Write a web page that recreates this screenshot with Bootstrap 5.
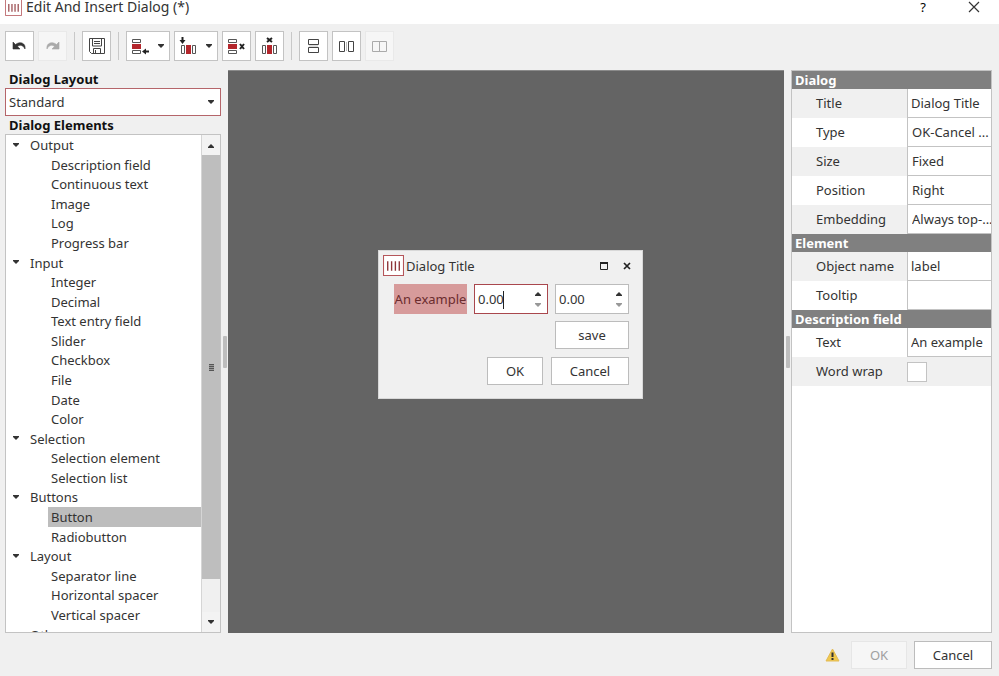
<!DOCTYPE html>
<html lang="en">
<head>
<meta charset="utf-8">
<meta name="viewport" content="width=device-width, initial-scale=1">
<title>Edit And Insert Dialog (*)</title>
<link href="https://cdn.jsdelivr.net/npm/bootstrap@5.3.0/dist/css/bootstrap.min.css" rel="stylesheet">
<style>
body{font-family:"Noto Sans","Open Sans",sans-serif;font-size:13px;line-height:18px;color:#333;background:#f0f0f0}
svg{display:block;flex:none}
h1,h2{font-size:14px;line-height:14px;font-weight:400;margin:0}
h2{font-size:13px;line-height:18px}
.titlebar{height:24px;background:#fff;padding:0 19px 10px 5px}
.titlebar button{border:0;background:none;padding:0;width:12px;line-height:14px}
.titlebar .help{margin-right:39px}
.tools{padding:7px 5px 9px}
.tool{display:flex;align-items:center;justify-content:center;gap:7px;width:29px;height:30px;padding:0;background:#fff;border:1px solid #c3c3c3}
.tool.wide{width:44px}
.tool:disabled{border-color:#e9e9e9;background:#f6f6f6}
.rule{width:1px;height:28px;background:#c8c8c8;margin:0 3px}
.leftpane{flex:0 0 216px;margin-left:5px}
.heading{font-weight:700;color:#111;padding-left:4px;line-height:18px}
.picker{position:relative;height:29px}
.picker select{appearance:none;width:100%;height:28px;border:1px solid #b5656a;background:#fff;color:#333;padding:0 3px;display:block}
.picker svg{position:absolute;right:6px;top:12px;pointer-events:none}
.treebox{border:1px solid #c3c3c3;background:#fff}
.tree{display:grid;grid-auto-rows:1fr;height:509px;margin:0;padding:0;list-style:none}
.tree li{display:flex;align-items:center;padding-left:3px;margin-left:42px}
.tree .group{margin-left:0;padding-left:6px;gap:10px}
.tree .chosen{background:#bdbdbd}
.scroller{width:19px;background:#f0f0f0;border-left:1px solid #d5d5d5}
.scroller button{height:20px;border:0;background:#f3f3f3;padding:0}
.thumb{background:#bebebe;height:424px}
.grip{width:5px;height:7px;background:repeating-linear-gradient(#555 0 1px,#999 1px 2px)}
.gutter{flex:0 0 7px}
.gutter span{width:4px;height:32px;background:#bdbdbd;border-radius:1px}
.canvas{background:#646464;border-top:1px solid #8a8a8a}
.props{flex:0 0 201px;border:1px solid #c3c3c3;background:#fff;overflow:hidden;margin-right:7px}
.props table{width:100%;table-layout:fixed;border-collapse:collapse;margin:0}
.props th,.props td{padding:0;font-weight:400;vertical-align:middle}
.props .section th{height:18px;line-height:18px;background:#808080;color:#fff;font-weight:700;padding-left:3px}
.props .entry{height:29px}
.props .entry th{padding:0 0 1px 24px}
.props label{display:block}
.props .shade{background:#f0f0f0}
.props td input[type=text],.props td select{appearance:none;display:block;width:100%;height:29px;border:1px solid #c3c3c3;border-width:0 0 1px 1px;border-radius:0;background:#fff;color:#333;padding:0 3px;outline:0}
.props td select{padding:0 0 0 4px}
.tick{appearance:none;display:block;width:20px;height:20px;border:1px solid #c3c3c3;background:#fff;margin:0}
.push{height:28px;border:1px solid #bcbcbc;background:#fff;color:#333;padding:0}
.push:disabled{border-color:#e6e6e6;background:#f6f6f6;color:#a0a0a0}
.w-s{width:56px}.w-l{width:78px}
.foot{padding:8px 7px 7px;gap:7px;height:43px}
.preview{position:absolute;left:150px;top:179px;width:265px;background:#f0f0f0;border:1px solid #d8d8d8;padding:4px 13px 13px 4px}
.preview .bar{gap:2px;margin-right:-6px}
.preview .maximise{margin-right:13px}
.fields{display:grid;grid-template-columns:73px 74px 74px;gap:7px;justify-content:end}
.marked{background:#d79b9b;color:#6b2c2e}
.spin{position:relative;height:30px;border:1px solid #bcbcbc;background:#fff}
.spin.active{border-color:#a9474d}
.spin input{width:100%;border:0;background:none;color:#333;padding:0 3px;outline:0;caret-color:transparent;min-width:0}
.spin button{border:0;background:none;padding:0;width:19px;height:12px}
.caret{position:absolute;left:28px;top:6px;width:1px;height:18px;background:#222}
</style>
<script defer src="https://cdn.jsdelivr.net/npm/bootstrap@5.3.0/dist/js/bootstrap.bundle.min.js"></script>
</head>
<body class="vh-100 d-flex flex-column overflow-hidden">
<svg class="d-none" aria-hidden="true">
  <symbol id="down" viewBox="0 0 8 5"><path d="M1 0h6v1L4 4 1 1z" fill="#333"/></symbol>
  <symbol id="up" viewBox="0 0 8 5"><path d="M1 5h6V4L4 1 1 4z" fill="#333"/></symbol>
  <symbol id="cross" viewBox="0 0 8 8"><path d="M1 1l6 6M7 1L1 7" stroke="#222" stroke-width="1.700"/></symbol>
  <symbol id="logo" viewBox="0 0 20 20"><path d="M.5.5h19v19H.5z" fill="#fff" stroke="#b5555a"/><path d="M4.500 6v9M8.200 6v9M11.800 6v9M15.500 6v9" stroke="#8d3438" stroke-width="1.300"/></symbol>
</svg>

<header class="titlebar d-flex align-items-center">
  <svg width="17" height="17" class="me-1"><use href="#logo"/></svg>
  <h1>Edit And Insert Dialog (*)</h1>
  <button class="help ms-auto" aria-label="Help">?</button>
  <button aria-label="Close"><svg width="12" height="12" viewBox="0 0 12 12"><path d="M1 1l10 10M11 1L1 11" stroke="#333" stroke-width="1.200"/></svg></button>
</header>

<div class="tools d-flex align-items-center gap-1" role="toolbar" aria-label="Tools">
  <button class="tool" aria-label="Undo"><svg width="15" height="12" viewBox="0 0 15 12"><path d="M1 2v7h7L5.500 6.500C8 4.500 11 5 13 9c1-6-5-8-9.500-4.500z" fill="#333" stroke="#333" stroke-width=".6"/></svg></button>
  <button class="tool" aria-label="Redo" disabled><svg width="15" height="12" viewBox="0 0 15 12"><path d="M14 2v7H7l2.500-2.500C7 4.500 4 5 2 9 1 3 7 1 11.500 4.500z" fill="#aaa" stroke="#aaa" stroke-width=".6"/></svg></button>
  <span class="rule"></span>
  <button class="tool" aria-label="Save"><svg width="16" height="16" viewBox="0 0 16 16" fill="none" stroke="#444"><path d="M.5.5h15v15h-13l-2-2zM3.500 1v7h9V1M5 3.500h6M5 5.500h6M4.500 15v-4.500h7V15M6.500 12v3"/></svg></button>
  <span class="rule"></span>
  <button class="tool wide" aria-label="Insert row"><svg width="19" height="17" viewBox="0 0 19 17"><path d="M1.500 1.500h8v3h-8zM1.500 12.500h8v3h-8z" fill="#fff" stroke="#555"/><path d="M1 6h9v5H1z" fill="#b3262c"/><path d="M18 13.500h-5" stroke="#222" stroke-width="2"/><path d="M11 13.500l4-3v6z" fill="#222"/></svg><svg width="8" height="5"><use href="#down"/></svg></button>
  <button class="tool wide" aria-label="Insert column"><svg width="19" height="18" viewBox="0 0 19 18"><path d="M2.500 8.500h3v8h-3zM13.500 8.500h3v8h-3z" fill="#fff" stroke="#555"/><path d="M7 8h5v9H7z" fill="#b3262c"/><path d="M3.500 0v4" stroke="#222" stroke-width="2"/><path d="M3.500 7l-3-4h6z" fill="#222"/></svg><svg width="8" height="5"><use href="#down"/></svg></button>
  <button class="tool" aria-label="Delete row"><svg width="19" height="17" viewBox="0 0 19 17"><path d="M1.500 1.500h8v3h-8zM1.500 12.500h8v3h-8z" fill="#fff" stroke="#555"/><path d="M1 6h9v5H1z" fill="#b3262c"/><path d="M13 6l4 5M17 6l-4 5" stroke="#222" stroke-width="2"/></svg></button>
  <button class="tool" aria-label="Delete column"><svg width="17" height="18" viewBox="0 0 17 18"><path d="M1.500 8.500h3v8h-3zM12.500 8.500h3v8h-3z" fill="#fff" stroke="#555"/><path d="M6 8h5v9H6z" fill="#b3262c"/><path d="M6 1l5 4M11 1L6 5" stroke="#222" stroke-width="2"/></svg></button>
  <span class="rule"></span>
  <button class="tool" aria-label="Merge rows"><svg width="11" height="16" viewBox="0 0 11 16"><path d="M.5 1.500h10v5H.5zM.5 9.500h10v5H.5z" fill="none" stroke="#444"/><path d="M1 8h9" stroke="#bbb"/></svg></button>
  <button class="tool" aria-label="Merge columns"><svg width="15" height="11" viewBox="0 0 15 11"><path d="M.5.5h5v10h-5zM9.500.5h5v10h-5z" fill="none" stroke="#444"/><path d="M7.500 1v9" stroke="#bbb"/></svg></button>
  <button class="tool" aria-label="Split" disabled><svg width="15" height="11" viewBox="0 0 15 11"><path d="M.5.5h14v10H.5zM7.500 1v9" fill="none" stroke="#aaa"/></svg></button>
</div>

<main class="d-flex flex-fill overflow-hidden">
  <section class="leftpane d-flex flex-column">
    <label class="heading" for="layout">Dialog Layout</label>
    <div class="picker"><select id="layout"><option>Standard</option></select><svg width="8" height="5"><use href="#down"/></svg></div>
    <div class="heading" id="elements">Dialog Elements</div>
    <div class="treebox d-flex flex-fill overflow-hidden">
      <div class="flex-grow-1 overflow-hidden">
      <ul class="tree" aria-labelledby="elements">
        <li class="group"><svg width="8" height="5"><use href="#down"/></svg>Output</li>
        <li>Description field</li><li>Continuous text</li><li>Image</li><li>Log</li><li>Progress bar</li>
        <li class="group"><svg width="8" height="5"><use href="#down"/></svg>Input</li>
        <li>Integer</li><li>Decimal</li><li>Text entry field</li><li>Slider</li><li>Checkbox</li><li>File</li><li>Date</li><li>Color</li>
        <li class="group"><svg width="8" height="5"><use href="#down"/></svg>Selection</li>
        <li>Selection element</li><li>Selection list</li>
        <li class="group"><svg width="8" height="5"><use href="#down"/></svg>Buttons</li>
        <li class="chosen">Button</li><li>Radiobutton</li>
        <li class="group"><svg width="8" height="5"><use href="#down"/></svg>Layout</li>
        <li>Separator line</li><li>Horizontal spacer</li><li>Vertical spacer</li>
        <li class="group"><svg width="8" height="5"><use href="#down"/></svg>Other</li>
      </ul>
      </div>
      <div class="scroller d-flex flex-column">
        <button aria-label="Scroll up"><svg class="mx-auto" width="8" height="5"><use href="#up"/></svg></button>
        <div class="thumb d-flex align-items-center justify-content-center"><span class="grip"></span></div>
        <button class="mt-auto" aria-label="Scroll down"><svg class="mx-auto" width="8" height="5"><use href="#down"/></svg></button>
      </div>
    </div>
  </section>
  <div class="gutter d-flex align-items-center justify-content-center"><span></span></div>
  <section class="canvas flex-grow-1 position-relative">
    <div class="preview" role="dialog" aria-labelledby="dlg">
      <div class="bar d-flex align-items-center">
        <svg width="21" height="21"><use href="#logo"/></svg>
        <h2 id="dlg">Dialog Title</h2>
        <svg class="maximise ms-auto" width="8" height="8" viewBox="0 0 8 8"><path d="M.5 1h7v6.500h-7z" fill="none" stroke="#222"/><path d="M0 1h8" stroke="#222" stroke-width="2"/></svg>
        <svg class="me-1" width="8" height="8"><use href="#cross"/></svg>
      </div>
      <div class="fields mt-2">
        <label class="marked d-flex align-items-center justify-content-center" for="n1">An example</label>
        <div class="spin active d-flex align-items-center"><input id="n1" type="text" role="spinbutton" value="0.00"><span class="caret"></span>
          <div class="d-flex flex-column"><button aria-label="Increase"><svg class="mx-auto" width="8" height="5"><use href="#up"/></svg></button><button aria-label="Decrease"><svg class="mx-auto opacity-50" width="8" height="5"><use href="#down"/></svg></button></div></div>
        <div class="spin d-flex align-items-center"><input type="text" role="spinbutton" aria-label="Second value" value="0.00">
          <div class="d-flex flex-column"><button aria-label="Increase"><svg class="mx-auto" width="8" height="5"><use href="#up"/></svg></button><button aria-label="Decrease"><svg class="mx-auto opacity-50" width="8" height="5"><use href="#down"/></svg></button></div></div>
        <div></div><div></div><button class="push">save</button>
      </div>
      <div class="d-flex justify-content-end gap-2 mt-2"><button class="push w-s">OK</button><button class="push w-l">Cancel</button></div>
    </div>
  </section>
  <div class="gutter d-flex align-items-center justify-content-center"><span></span></div>
  <section class="props">
    <table>
      <colgroup><col><col width="84"></colgroup>
      <tbody>
      <tr class="section"><th colspan="2">Dialog</th></tr>
      <tr class="entry shade"><th><label for="p1">Title</label></th><td><input id="p1" type="text" value="Dialog Title"></td></tr>
      <tr class="entry"><th><label for="p2">Type</label></th><td><select id="p2"><option>OK-Cancel ...</option></select></td></tr>
      <tr class="entry shade"><th><label for="p3">Size</label></th><td><select id="p3"><option>Fixed</option></select></td></tr>
      <tr class="entry"><th><label for="p4">Position</label></th><td><select id="p4"><option>Right</option></select></td></tr>
      <tr class="entry shade"><th><label for="p5">Embedding</label></th><td><select id="p5"><option>Always top-...</option></select></td></tr>
      <tr class="section"><th colspan="2">Element</th></tr>
      <tr class="entry shade"><th><label for="p6">Object name</label></th><td><input id="p6" type="text" value="label"></td></tr>
      <tr class="entry"><th><label for="p7">Tooltip</label></th><td><input id="p7" type="text" value=""></td></tr>
      <tr class="section"><th colspan="2">Description field</th></tr>
      <tr class="entry"><th><label for="p8">Text</label></th><td><input id="p8" type="text" value="An example"></td></tr>
      <tr class="entry shade"><th><label for="p9">Word wrap</label></th><td><input id="p9" type="checkbox" class="tick"></td></tr>
      </tbody>
    </table>
  </section>
</main>

<footer class="foot d-flex align-items-center justify-content-end">
  <svg width="15" height="14" viewBox="0 0 15 14"><path d="M7.500 1L14 13H1z" fill="#f0c84e" stroke="#e3bb55"/><path d="M7.500 4.500v4.500M7.500 10v2" stroke="#333" stroke-width="2"/></svg>
  <button class="push w-s ms-1" disabled>OK</button>
  <button class="push w-l">Cancel</button>
</footer>
</body>
</html>
